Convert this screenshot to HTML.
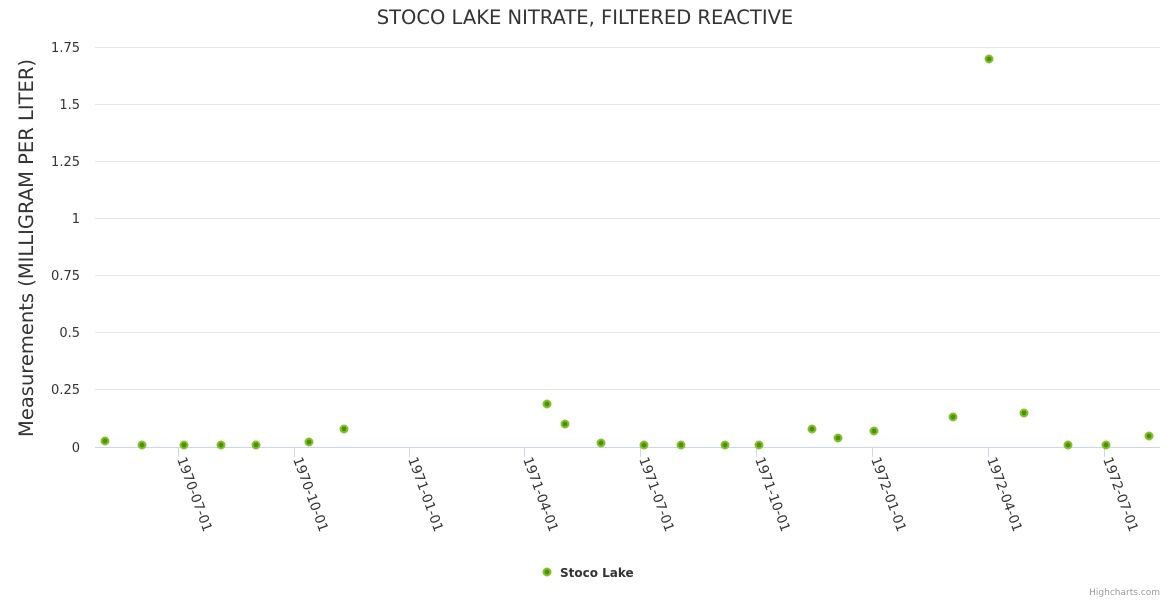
<!DOCTYPE html>
<html><head><style>body{margin:0;background:#fff}svg{display:block;font-family:"DejaVu Sans","Liberation Sans",sans-serif}</style></head><body>
<svg width="1170" height="600" xmlns="http://www.w3.org/2000/svg">
<text x="585" y="24" text-anchor="middle" font-size="19.5" fill="#333">STOCO LAKE NITRATE, FILTERED REACTIVE</text>
<g stroke="#e6e6e6" stroke-width="1">
<line x1="95" x2="1160" y1="47.5" y2="47.5"/><line x1="95" x2="1160" y1="104.5" y2="104.5"/><line x1="95" x2="1160" y1="161.5" y2="161.5"/><line x1="95" x2="1160" y1="218.5" y2="218.5"/><line x1="95" x2="1160" y1="275.5" y2="275.5"/><line x1="95" x2="1160" y1="332.5" y2="332.5"/><line x1="95" x2="1160" y1="389.5" y2="389.5"/>
</g>
<line x1="95" x2="1160" y1="447.5" y2="447.5" stroke="#ccd6eb"/>
<g stroke="#ccd6eb"><line x1="178.5" x2="178.5" y1="447" y2="457"/><line x1="294.5" x2="294.5" y1="447" y2="457"/><line x1="409.5" x2="409.5" y1="447" y2="457"/><line x1="524.5" x2="524.5" y1="447" y2="457"/><line x1="640.5" x2="640.5" y1="447" y2="457"/><line x1="756.5" x2="756.5" y1="447" y2="457"/><line x1="872.5" x2="872.5" y1="447" y2="457"/><line x1="988.5" x2="988.5" y1="447" y2="457"/><line x1="1104.5" x2="1104.5" y1="447" y2="457"/></g>
<g font-size="13" fill="#333" text-anchor="end">
<text x="80" y="52">1.75</text><text x="80" y="109">1.5</text><text x="80" y="166">1.25</text><text x="80" y="223">1</text><text x="80" y="280">0.75</text><text x="80" y="337">0.5</text><text x="80" y="394">0.25</text><text x="80" y="452">0</text>
</g>
<text transform="translate(33,248) rotate(-90)" text-anchor="middle" font-size="19.5" fill="#333">Measurements (MILLIGRAM PER LITER)</text>
<g font-size="13.5" fill="#333">
<text transform="translate(177,459) rotate(70)">1970-07-01</text>
<text transform="translate(293,459) rotate(70)">1970-10-01</text>
<text transform="translate(408,459) rotate(70)">1971-01-01</text>
<text transform="translate(523,459) rotate(70)">1971-04-01</text>
<text transform="translate(639,459) rotate(70)">1971-07-01</text>
<text transform="translate(755,459) rotate(70)">1971-10-01</text>
<text transform="translate(871,459) rotate(70)">1972-01-01</text>
<text transform="translate(987,459) rotate(70)">1972-04-01</text>
<text transform="translate(1103,459) rotate(70)">1972-07-01</text>
</g>
<g fill="#4a9300" stroke="#86c030" stroke-width="2">
<circle cx="105" cy="441" r="3.5"/><circle cx="142" cy="445" r="3.5"/><circle cx="184" cy="445" r="3.5"/><circle cx="221" cy="445" r="3.5"/><circle cx="256" cy="445" r="3.5"/><circle cx="309" cy="442" r="3.5"/><circle cx="344" cy="429" r="3.5"/><circle cx="547" cy="404" r="3.5"/><circle cx="565" cy="424" r="3.5"/><circle cx="601" cy="443" r="3.5"/><circle cx="644" cy="445" r="3.5"/><circle cx="681" cy="445" r="3.5"/><circle cx="725" cy="445" r="3.5"/><circle cx="759" cy="445" r="3.5"/><circle cx="812" cy="429" r="3.5"/><circle cx="838" cy="438" r="3.5"/><circle cx="874" cy="431" r="3.5"/><circle cx="953" cy="417" r="3.5"/><circle cx="989" cy="59" r="3.5"/><circle cx="1024" cy="413" r="3.5"/><circle cx="1068" cy="445" r="3.5"/><circle cx="1106" cy="445" r="3.5"/><circle cx="1149" cy="436" r="3.5"/>
<circle cx="547" cy="572" r="3.5"/>
</g>
<text x="560" y="577" font-size="12" font-weight="bold" fill="#333">Stoco Lake</text>
<text x="1160" y="595" text-anchor="end" font-size="9" fill="#999">Highcharts.com</text>
</svg>
</body></html>
